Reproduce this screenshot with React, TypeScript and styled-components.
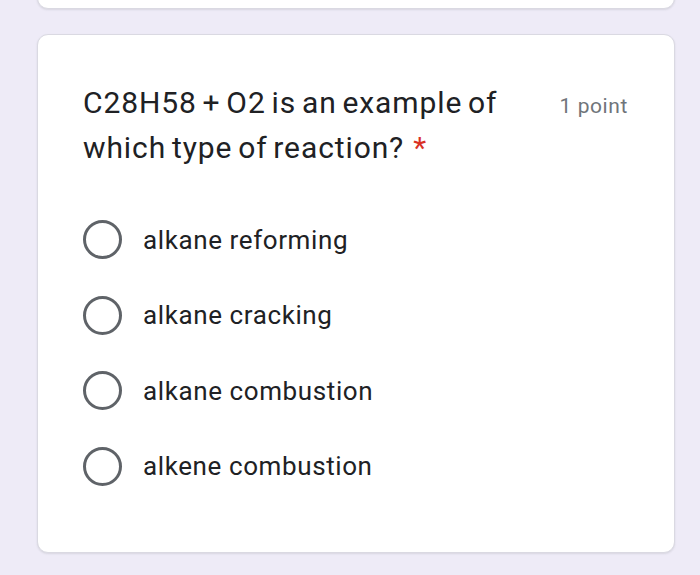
import React from "react";
import styled, { createGlobalStyle } from "styled-components";

const Global = createGlobalStyle`
  html, body { margin: 0; padding: 0; background: #eeebf7; }
  body { font-family: Roboto, "Noto Sans", Arial, sans-serif; }
`;

const Page = styled.div`
  box-sizing: border-box;
  width: 700px;
  height: 575px;
  overflow: hidden;
  background: #eeebf7;
  display: flex;
  flex-direction: column;
  align-items: flex-start;
  padding-left: 37px;
  gap: 25px;
`;

const Card = styled.div`
  box-sizing: border-box;
  flex: none;
  width: 638px;
  background: #fff;
  border: 1px solid #dad9e2;
  border-radius: 11px;
  box-shadow: 0 1px 2px rgba(60, 64, 67, 0.12);
`;

const PrevCard = styled(Card)`
  height: 49px;
  margin-top: -40px;
`;

const QuestionCard = styled(Card)`
  padding: 45px 46px 48px 45px;
`;

const Header = styled.div`
  display: flex;
  align-items: baseline;
  gap: 30px;
`;

const Title = styled.div`
  flex: 1;
  font-size: 30px;
  line-height: 45px;
  color: #202124;
  letter-spacing: 0.9px;
  word-spacing: -2.5px;
`;

const Star = styled.span`
  color: #d93025;
  margin-left: 9px;
`;

const Points = styled.div`
  font-size: 21px;
  line-height: 45px;
  color: #70757a;
  white-space: nowrap;
  letter-spacing: 0.6px;
`;

const Options = styled.div`
  display: flex;
  flex-direction: column;
  margin-top: 32px;
`;

const Option = styled.label`
  display: flex;
  align-items: center;
  height: 75.5px;
  gap: 21px;
`;

const Radio = styled.span`
  box-sizing: border-box;
  width: 39px;
  height: 39px;
  border-radius: 50%;
  border: 3.5px solid #5f6368;
  flex: none;
`;

const OptionText = styled.span`
  font-size: 26px;
  color: #202124;
  letter-spacing: 0.6px;
`;

const options = [
  "alkane reforming",
  "alkane cracking",
  "alkane combustion",
  "alkene combustion",
];

export default function App() {
  return (
    <>
      <Global />
      <Page>
        <PrevCard />
        <QuestionCard>
          <Header>
            <Title>
              C28H58 + O2 is an example of which type of reaction?
              <Star>*</Star>
            </Title>
            <Points>1 point</Points>
          </Header>
          <Options>
            {options.map((o) => (
              <Option key={o}>
                <Radio />
                <OptionText>{o}</OptionText>
              </Option>
            ))}
          </Options>
        </QuestionCard>
      </Page>
    </>
  );
}
